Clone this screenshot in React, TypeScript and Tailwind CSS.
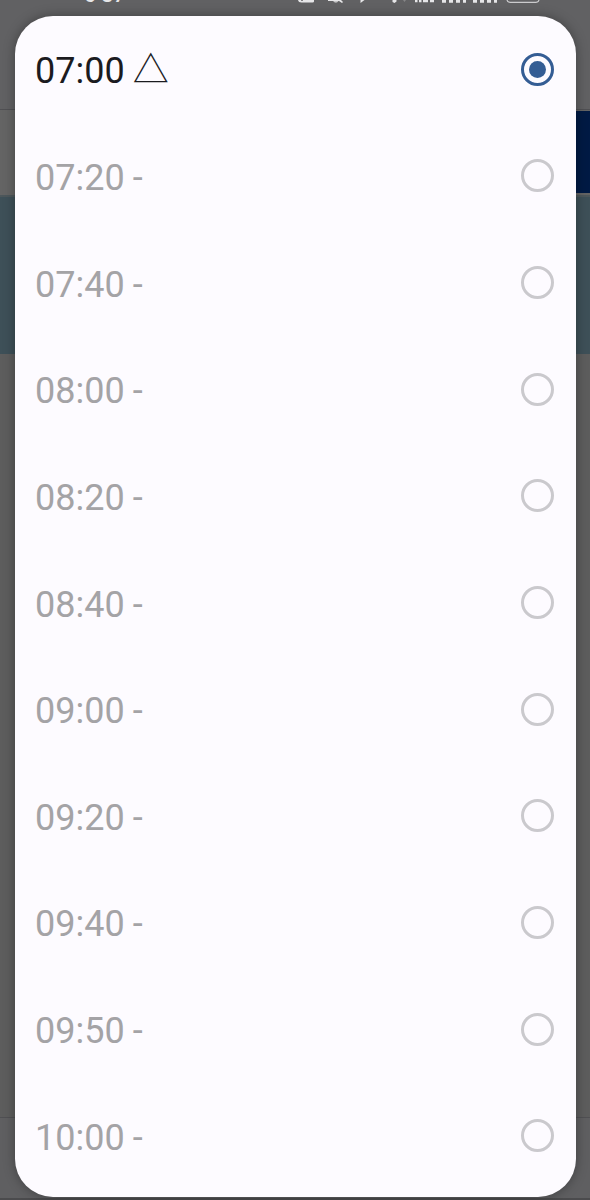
import { useState } from "react";

const slots = [
  { time: "07:00", mark: "△", open: true },
  { time: "07:20", mark: "-", open: false },
  { time: "07:40", mark: "-", open: false },
  { time: "08:00", mark: "-", open: false },
  { time: "08:20", mark: "-", open: false },
  { time: "08:40", mark: "-", open: false },
  { time: "09:00", mark: "-", open: false },
  { time: "09:20", mark: "-", open: false },
  { time: "09:40", mark: "-", open: false },
  { time: "09:50", mark: "-", open: false },
  { time: "10:00", mark: "-", open: false },
];

/* The status bar is scrolled up so that only its lower edge shows */
function StatusBar() {
  return (
    <div className="flex h-[7px] items-end justify-between overflow-hidden pr-12 pl-[84px] text-[#e6e6e8]">
      <span className="flex text-[21px] leading-6 font-medium">
        6<span className="pb-1 leading-5">:</span>37
      </span>
      <svg className="h-[7px] w-[245px]" viewBox="297 0 245 7" fill="currentColor" aria-hidden="true">
        <path d="M298 0h3v.8h2V0h11v1.500q0 1-1.500 1h-11q-3 0-3.500-2.500ZM328 0h13l2 2-1 1-3-2h-11ZM333 1.200h5.500q-2.500 2.500-5.500 0ZM360.500 0h4l-4 3ZM392.500 0h4v1.500l-2 1.500-2-1Z" />
        <path d="M403 0h3l-1.500 2Z" fill="#858587" />
        <path d="M415 0h2.500v2.200h-2.500zM419 0h2.500v2.200h-2.500zM423 0h5v2.200h-5zM430 0h4v2.200h-4zM442 0h4v2.700h-4zM449 0h4v2.700h-4zM456 0h4v2.700h-4zM463 0h3v2.700h-3zM473 0h4v2.700h-4zM480 0h4v2.700h-4zM487 0h4v2.700h-4zM494 0h3v2.700h-3z" />
        <path d="M507 0q0 2.300 3 2.300h26q3 0 3-2.300" fill="none" stroke="currentColor" />
      </svg>
    </div>
  );
}

function Backdrop() {
  return (
    <div className="absolute inset-0 flex flex-col bg-[#5d5d5d]" aria-hidden="true">
      <div className="h-[110px] border-b border-[#505053] bg-[#616163]">
        <StatusBar />
      </div>
      <div className="flex h-[87px] justify-end border-b-2 border-[#4d575b] bg-[#646464] pt-px pb-0.5">
        <div className="w-1/2 bg-[#001a44]" />
      </div>
      <div className="h-[157px] bg-[#3e5058]" />
      <div className="flex-1" />
      <div className="h-[83px] border-t border-b-2 border-t-[#505053] border-b-[#4b4b4d] bg-[#5f5f61]" />
    </div>
  );
}

export default function App() {
  const [selected, setSelected] = useState("07:00");

  return (
    <div className="relative flex min-h-screen flex-col pt-4 pr-3.5 pb-[3px] pl-[15px] font-['Roboto','Noto_Sans_CJK_JP',sans-serif]">
      <Backdrop />
      <div
        role="dialog"
        aria-label="Time"
        className="relative flex flex-1 flex-col rounded-[38px] bg-[#fdfbff] pb-2 shadow-[0_0_12px_rgba(0,0,0,0.35)]"
      >
        {slots.map((slot) => (
          <label
            key={slot.time}
            className="flex flex-1 items-center justify-between pr-[22px] pl-5 text-4xl text-[#1b1b1f] has-disabled:text-[#a4a3a6]"
          >
            <span className="flex items-center gap-2 pt-1">
              <span>{slot.time}</span>
              <span>{slot.mark}</span>
            </span>
            <input
              type="radio"
              name="time"
              value={slot.time}
              disabled={!slot.open}
              checked={selected === slot.time}
              onChange={() => setSelected(slot.time)}
              className="grid size-[33px] appearance-none place-items-center rounded-full border-3 border-[#345d94] before:size-[17px] before:rounded-full checked:before:bg-[#345d94] disabled:border-[#cac9cd]"
            />
          </label>
        ))}
      </div>
    </div>
  );
}
